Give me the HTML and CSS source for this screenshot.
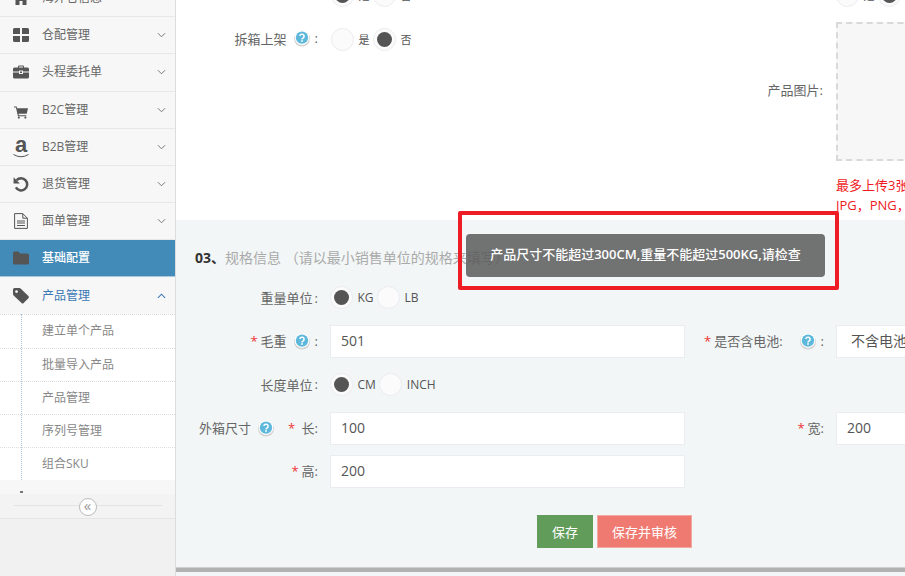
FILE: index.html
```html
<!DOCTYPE html>
<html lang="zh-CN">
<head>
<meta charset="utf-8">
<title>产品管理</title>
<link rel="stylesheet" href="styles.css">
</head>
<body>
<svg class="sprite" width="0" height="0" aria-hidden="true">
  <defs>
    <symbol id="chev" viewBox="0 0 10 6"><polyline points="1,1 5,5 9,1" fill="none" stroke="currentColor" stroke-width="1.1"/></symbol>
    <symbol id="chevup" viewBox="0 0 10 6"><polyline points="1,5 5,1 9,5" fill="none" stroke="currentColor" stroke-width="1.2"/></symbol>
    <symbol id="help" viewBox="0 0 18 18"><circle cx="9" cy="9.6" r="8" fill="#d2d2d2"/><circle cx="9" cy="8.6" r="7.4" fill="#fff"/><circle cx="9" cy="8.6" r="6.2" fill="#5eb8dc"/><path d="M6.9 7.1a2.1 2 0 1 1 3.3 1.7c-.8.5-1.2.8-1.2 1.6" fill="none" stroke="#fff" stroke-width="1.5"/><rect x="8.2" y="11.2" width="1.6" height="1.6" fill="#fff"/></symbol>
  </defs>
</svg>
<div class="layout">
  <aside class="sidebar">
    <nav class="menu">
      <a class="item first"><svg class="ico" viewBox="0 0 16 14"><path d="M8 0 0 7l1 1 7-6 7 6 1-1-3-2.6V1h-2v1.7zM2.5 8.6V14h4v-4h3v4h4V8.6L8 3.8z" fill="#555"/></svg><span class="txt">海外仓信息</span><svg class="chev"><use href="#chev"/></svg></a>
      <a class="item"><svg class="ico" viewBox="0 0 16 14"><path d="M0 1.5Q0 0 1.500 0H7v6H0zM9 0h5.500Q16 0 16 1.500V6H9zM0 8h7v6H1.500Q0 14 0 12.500zM9 8h7v4.500Q16 14 14.500 14H9z" fill="#555"/></svg><span class="txt">仓配管理</span><svg class="chev"><use href="#chev"/></svg></a>
      <a class="item"><svg class="ico" viewBox="0 0 16 13"><path d="M5 2V1q0-1 1-1h4q1 0 1 1v1h3.500Q16 2 16 3.500V6H10V5H6v1H0V3.500Q0 2 1.500 2zm1 0h4V1H6zM0 7h6v1.500h4V7h6v4.500Q16 13 14.500 13h-13Q0 13 0 11.500zM7 6h2v1.500H7z" fill="#555"/></svg><span class="txt">头程委托单</span><svg class="chev"><use href="#chev"/></svg></a>
      <a class="item"><svg class="ico cart" viewBox="0 0 16 14"><path d="M0 0h3l.6 2H16l-1.500 6.500H5.200l.4 1.500H14v1.200H4.500L2.200 1.200H0z" fill="#555"/><circle cx="5.500" cy="12.800" r="1.200" fill="#555"/><circle cx="13" cy="12.800" r="1.200" fill="#555"/></svg><span class="txt">B2C管理</span><svg class="chev"><use href="#chev"/></svg></a>
      <a class="item"><span class="amz">a<svg class="smile" viewBox="0 0 16 4"><path d="M.5.500Q8 5 15.500.500" fill="none" stroke="#555" stroke-width="1"/></svg></span><span class="txt">B2B管理</span><svg class="chev"><use href="#chev"/></svg></a>
      <a class="item"><svg class="ico" viewBox="0 0 14 14"><path d="M3.200 3.700A5.300 5.300 0 1 1 2.500 10" fill="none" stroke="#555" stroke-width="2.200"/><path d="M.5 1v5.500H6z" fill="#555"/></svg><span class="txt">退货管理</span><svg class="chev"><use href="#chev"/></svg></a>
      <a class="item"><svg class="ico" viewBox="0 0 14 16"><path d="M.6.600h8.200l4.600 4.600v10.200H.6zM8.800.600v4.600h4.600M3 8h8M3 10h8M3 12.500h8" fill="none" stroke="#555" stroke-width="1"/></svg><span class="txt">面单管理</span><svg class="chev"><use href="#chev"/></svg></a>
      <a class="item active"><svg class="ico" viewBox="0 0 16 13"><path d="M1.500 0h4L7 2h7.500Q16 2 16 3.500v8Q16 13 14.500 13h-13Q0 13 0 11.500v-10Q0 0 1.500 0z" fill="#555"/></svg><span class="txt">基础配置</span></a>
      <a class="item open"><svg class="ico" viewBox="0 0 15 15"><path d="M0 1.500Q0 0 1.500 0H6q.8 0 1.400.6l7 7q1 1 0 2L10 14q-1 1-2 0L.6 7Q0 6.500 0 5.500zM3.300 2a1.300 1.300 0 1 0 .01 0z" fill="#555" fill-rule="evenodd"/></svg><span class="txt">产品管理</span><svg class="chev"><use href="#chevup"/></svg></a>
      <ul class="sub">
        <li>建立单个产品</li>
        <li>批量导入产品</li>
        <li>产品管理</li>
        <li>序列号管理</li>
        <li>组合SKU</li>
      </ul>
    </nav>
    <div class="peek"><span class="peek-dot"></span></div>
    <div class="collapse"><span class="toggle">«</span></div>
  </aside>

  <main class="main">
    <section class="top">
      <div class="top-left">
        <div class="row-cut">
          <span class="radio on"></span><span class="rlabel">是</span>
          <span class="radio"></span><span class="rlabel">否</span>
        </div>
        <div class="line">
          <label class="lab">拆箱上架<svg class="help"><use href="#help"/></svg><i class="colon">:</i></label>
          <span class="radio"></span><span class="rlabel">是</span>
          <span class="radio on"></span><span class="rlabel">否</span>
        </div>
      </div>
      <div class="top-right">
        <div class="row-cut">
          <span class="radio"></span><span class="rlabel">是</span>
          <span class="radio on"></span>
        </div>
        <div class="upload-row">
          <label class="lab2">产品图片:</label>
          <div class="upload"></div>
        </div>
        <p class="note first-note">最多上传3张图片，图片大小不超过2M</p>
        <p class="note">JPG，PNG，JPEG格式</p>
      </div>
    </section>

    <section class="spec">
      <h3 class="title"><b>03、</b>规格信息 （请以最小销售单位的规格来填写）</h3>
      <div class="grid">
        <label class="lab">重量单位<i class="colon tight">:</i></label>
        <div class="field"><span class="radio on"></span><span class="rlabel">KG</span><span class="radio"></span><span class="rlabel">LB</span></div>
        <span></span><span></span>

        <label class="lab"><em>*</em> 毛重<svg class="help"><use href="#help"/></svg><i class="colon">:</i></label>
        <div class="input">501</div>
        <label class="lab"><em>*</em> 是否含电池:<svg class="help wide"><use href="#help"/></svg><i class="colon">:</i></label>
        <div class="input clip">不含电池</div>

        <label class="lab">长度单位<i class="colon tight">:</i></label>
        <div class="field"><span class="radio on"></span><span class="rlabel">CM</span><span class="radio"></span><span class="rlabel">INCH</span></div>
        <span></span><span></span>

        <label class="lab split"><span class="outer">外箱尺寸<svg class="help"><use href="#help"/></svg></span><span><em>*</em> 长:</span></label>
        <div class="input">100</div>
        <label class="lab"><em>*</em> 宽:</label>
        <div class="input">200</div>

        <label class="lab"><em>*</em> 高:</label>
        <div class="input">200</div>
        <span></span><span></span>
      </div>
      <div class="actions">
        <button class="btn save">保存</button>
        <button class="btn audit">保存并审核</button>
      </div>
    </section>
    <div class="bar"></div>
  </main>
</div>

<div class="mark"></div>
<div class="toast">产品尺寸不能超过<b class="latin">300CM,</b>重量不能超过<b class="latin">500KG,</b>请检查</div>
</body>
</html>
```
FILE: styles.css
```css
* { box-sizing: border-box; }
html, body { margin: 0; height: 576px; overflow: hidden; }
body {
  font-family: "Open Sans", "Noto Sans CJK SC", sans-serif;
  font-size: 13px;
  color: #555;
  background: #fff;
}
.sprite { position: absolute; }
.layout { display: flex; height: 576px; }

/* sidebar */
.sidebar {
  flex: 0 0 176px;
  height: 576px;
  background: #f1f1f1;
  border-right: 1px solid #ddd;
  display: flex;
  flex-direction: column;
  overflow: hidden;
}
.menu { margin-top: -20px; background: #f7f7f7; }
.item {
  display: flex;
  align-items: center;
  height: 37.200px;
  padding: 0 9px 0 13px;
  border-bottom: 1px solid #e8e8e8;
  font-size: 12px;
  color: #666;
  background: #f7f7f7;
}
.ico { width: 16px; height: 16px; flex: none; }
.cart { width: 14px; height: 13px; margin: 5px 1px 0; }
.txt { margin-left: 13px; flex: 1; white-space: nowrap; padding-bottom: 2px; }
.chev { width: 9px; height: 6px; flex: none; color: #777; }
.amz {
  width: 16px;
  height: 24px;
  flex: none;
  display: flex;
  flex-direction: column;
  align-items: center;
  font-family: "Liberation Sans", sans-serif;
  font-weight: bold;
  font-size: 22px;
  line-height: 18px;
  color: #555;
  margin-top: 3px;
}
.smile { width: 16px; height: 4px; display: block; }
.active { background: #428bb8; color: #fff; font-weight: 500; border-bottom: 1px solid #a9c8dc; height: 37px; }
.open { color: #3a78b5; height: 37px; border-bottom: 0; }
.open .chev { color: #3a78b5; }
.sub {
  list-style: none;
  margin: 0;
  padding: 0;
  background: #fff;
  position: relative;
}
.sub::before {
  content: "";
  position: absolute;
  left: 21px;
  top: 0;
  bottom: 0;
  border-left: 1px dotted #a9c4dd;
}
.sub li {
  height: 33.200px;
  line-height: 31px;
  padding-left: 42px;
  font-size: 12px;
  color: #888;
  border-top: 1px dotted #ddd;
}
.peek { height: 14px; background: #f7f7f7; flex: none; overflow: hidden; padding: 11px 0 0 20px; }
.peek-dot { display: block; width: 3px; height: 2px; background: #777; }
.collapse {
  height: 25px;
  flex: none;
  background: #f3f3f3;
  border-bottom: 1px solid #e5e5e5;
  position: relative;
  display: flex;
  align-items: center;
  justify-content: center;
}
.collapse::before {
  content: "";
  position: absolute;
  left: 14px;
  right: 13px;
  top: 11px;
  border-top: 1px solid #e3e3e3;
}
.toggle {
  position: relative;
  width: 18px;
  height: 18px;
  border-radius: 50%;
  border: 1px solid #bbb;
  background: #fff;
  color: #999;
  font-size: 15px;
  line-height: 13px;
  text-align: center;
  margin-top: 1px;
}

/* main */
.main { flex: 1; min-width: 0; overflow: hidden; background: #f2f6f6; }
.top {
  height: 220px;
  display: grid;
  grid-template-columns: 509px 1fr;
  background: #fff;
  overflow: hidden;
}
.top-left, .top-right { margin-top: -22px; }
.row-cut { display: flex; align-items: center; height: 34px; padding-left: 155px; }
.top-right .row-cut { padding-left: 151px; }
.line { display: flex; align-items: center; height: 34px; margin-top: 10px; }
.lab {
  flex: 0 0 143px;
  display: flex;
  align-items: center;
  justify-content: flex-end;
  white-space: nowrap;
  color: #666;
  padding-right: 1px;
  padding-bottom: 2px;
}
.line .lab { margin-right: 12px; }
.lab em { color: #e33; font-style: normal; margin-right: 3px; }
.colon { font-style: normal; margin-left: 4px; }
.colon.tight { margin-left: 2px; }
.help { width: 18px; height: 18px; margin-left: 6px; flex: none; }
.help.wide { margin-left: 16px; }
.radio {
  width: 23px;
  height: 23px;
  flex: none;
  border-radius: 50%;
  border: 1px solid #ebecf1;
  background: #fbfbfc;
  position: relative;
}
.radio.on::after {
  content: "";
  position: absolute;
  inset: 3px;
  border-radius: 50%;
  background: #555;
}
.rlabel { margin: 0 3.500px 0 4.500px; font-size: 12px; color: #555; }
.top .rlabel { font-size: 11px; }
.upload-row { display: flex; align-items: center; margin-top: 10px; }
.lab2 { width: 138px; margin-right: 13px; padding-bottom: 4px; text-align: right; white-space: nowrap; color: #666; flex: none; }
.upload {
  width: 180px;
  height: 139px;
  flex: none;
  background: #f7f7f7;
  border: 2px dashed #d9d9d9;
}
.note {
  margin: 0;
  padding-left: 151px;
  color: #f01a24;
  white-space: nowrap;
  line-height: 20px;
}
.first-note { margin-top: 14px; }

.spec {
  height: 347px;
  background: #f2f6f6;
  padding-top: 28px;
  overflow: hidden;
}
.title {
  margin: 0 0 0 19px;
  height: 20px;
  line-height: 20px;
  font-size: 14px;
  font-weight: 400;
  color: #aaa;
  white-space: nowrap;
}
.title b { color: #333; }
.grid {
  display: grid;
  grid-template-columns: 143px 355px 129px 180px;
  grid-template-rows: 33px 33px 34px 33px 33px;
  column-gap: 11px;
  row-gap: 10px;
  margin-top: 14px;
}
.split { justify-content: space-between; padding-left: 23px; }
.outer { display: flex; align-items: center; }
.field { display: flex; align-items: center; padding-bottom: 2px; }
.input {
  height: 33px;
  line-height: 30px;
  padding-left: 10px;
  background: #fff;
  border: 1px solid #e9edf2;
  font-size: 14px;
  color: #555;
}
.clip { padding-left: 14px; white-space: nowrap; }
.actions { display: flex; gap: 4px; margin-top: 27px; padding-left: 361px; }
.btn {
  height: 33px;
  border: 1px solid transparent;
  color: #fff;
  font: inherit;
  font-size: 13px;
  padding: 0;
}
.save { width: 56px; background: #629c5a; }
.audit { width: 95px; background: #ef7a71; border-color: #f3a9a3; }
.bar { height: 5px; background: #b2b2b2; border-top: 1px solid #d0d0d0; }

/* overlays */
.mark {
  position: absolute;
  left: 458px;
  top: 211px;
  width: 381px;
  height: 79px;
  border: 4px solid #ee1c25;
  border-radius: 2px;
}
.toast {
  position: absolute;
  left: 466px;
  top: 234px;
  width: 359px;
  height: 43px;
  line-height: 41px;
  text-align: center;
  color: #fff;
  font-weight: 500;
  background: rgba(90, 90, 90, .85);
  border-radius: 4px;
  white-space: nowrap;
}
.latin { font-weight: 600; }
```
